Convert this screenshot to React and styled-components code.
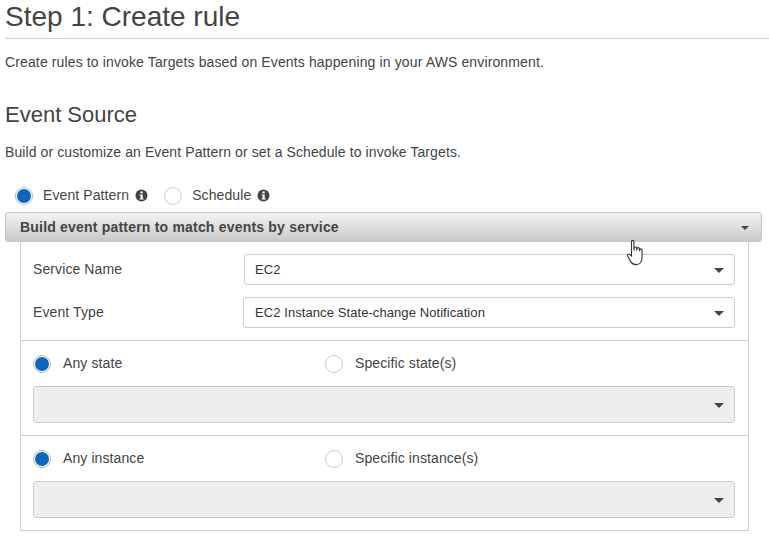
import React from "react";
import styled, { createGlobalStyle } from "styled-components";

const Global = createGlobalStyle`
  html, body { margin: 0; padding: 0; background: #fff; width: 769px; height: 539px; overflow: hidden; }
  body { font-family: "Liberation Sans", Arial, sans-serif; color: #444; }
  * { box-sizing: border-box; }
`;
const Page = styled.div`position: relative; width: 769px; height: 539px; padding: 0 0 0 5px; overflow: hidden;`;
const Title = styled.h1`
  margin: 0; width: 764px; height: 39px; border-bottom: 1px solid #ccc;
  font-size: 28px; line-height: 33px; font-weight: 400; color: #444;
`;
const Lead = styled.p`margin: 15px 0 0; font-size: 14px; line-height: 17px; color: #444; letter-spacing: .13px;`;
const Heading = styled.h2`margin: 30px 0 0; font-size: 22px; line-height: 27px; font-weight: 400; color: #444;`;
const Sub = styled.p`margin: 16px 0 0; font-size: 14px; line-height: 17px; color: #444; letter-spacing: .1px;`;
const SourceRow = styled.div`display: flex; align-items: center; height: 20px; margin-top: 24px; padding-left: 10px;`;
const Radio = styled.span`
  flex: none; width: 18px; height: 18px; margin-top: 2px; border-radius: 50%; background: #fff;
  border: 1px solid ${p => (p.$on ? "#a9bdd0" : "#ccc")};
  display: flex; align-items: center; justify-content: center;
  &::after { content: ""; width: 14px; height: 14px; border-radius: 50%; background: ${p => (p.$on ? "#1166bb" : "transparent")}; }
`;
const Label = styled.span`font-size: 14px; line-height: 17px; color: #444; letter-spacing: .1px; margin-left: ${p => p.$gap || 12}px;`;
const Info = styled.svg`width: 13px; height: 13px; margin-left: 6px; flex: none;`;
const Spacer = styled.span`width: ${p => p.$w}px; flex: none;`;
const Accordion = styled.div`
  display: flex; align-items: center; justify-content: space-between;
  width: 757px; height: 30px; margin-top: 7px; padding: 0 12px 0 14px;
  border: 1px solid #c6c6c6; border-radius: 3px;
  background: linear-gradient(#f4f4f4, #c9c9c9);
  font-size: 14px; font-weight: 700; color: #444; letter-spacing: .2px;
`;
const Panel = styled.div`
  width: 729px; margin-left: 15px; height: 289px;
  border: 1px solid #ccc; border-top: 0;
`;
const Fields = styled.div`height: 99px; padding: 12px 13px 0 12px; display: flex; flex-direction: column; gap: 12px; border-bottom: 1px solid #ccc;`;
const Field = styled.div`display: flex; align-items: center; justify-content: space-between;`;
const FieldLabel = styled.span`font-size: 14px; color: #444; letter-spacing: .1px; margin-bottom: 2px;`;
const Select = styled.div`
  display: flex; align-items: center; justify-content: space-between;
  width: ${p => p.$w || 491}px; height: ${p => p.$h || 31}px; padding: 0 10px 0 ${p => p.$pl || 10}px;
  border: 1px solid #ccc; border-radius: 3px;
  background: ${p => (p.$off ? "#eee" : "#fff")};
  font-size: 13px; letter-spacing: .08px; color: #333;
`;
const Arrow = styled.span`
  width: 0; height: 0; border-left: ${p => p.$s || 5}px solid transparent; border-right: ${p => p.$s || 5}px solid transparent;
  border-top: ${p => p.$s || 5}px solid #444; margin-top: 1px;
`;
const Group = styled.div`
  height: 95px; padding: 12px 13px 0 12px;
  border-bottom: ${p => (p.$last ? 0 : "1px solid #ccc")};
`;
const RadioRow = styled.div`display: grid; grid-template-columns: 292px 1fr; height: 20px;`;
const RadioCell = styled.div`display: flex; align-items: center;`;
const GroupSelect = styled(Select)`margin-top: 13px;`;
const Cursor = styled.svg`position: absolute; left: 626px; top: 239px; width: 22px; height: 30px;`;

const InfoIcon = () => (
  <Info viewBox="0 0 13 13">
    <circle cx="6.5" cy="6.5" r="6" fill="#444" />
    <rect x="5.5" y="2.4" width="2.2" height="2" fill="#fff" />
    <path d="M4.6 5.4h3.1v4.1h1v1.1H4.6V9.5h1V6.5h-1z" fill="#fff" />
  </Info>
);

export default function App() {
  return (
    <Page>
      <Global />
      <Title>Step 1: Create rule</Title>
      <Lead>Create rules to invoke Targets based on Events happening in your AWS environment.</Lead>
      <Heading>Event Source</Heading>
      <Sub>Build or customize an Event Pattern or set a Schedule to invoke Targets.</Sub>
      <SourceRow>
        <Radio $on />
        <Label $gap={10}>Event Pattern</Label>
        <InfoIcon />
        <Spacer $w={16} />
        <Radio />
        <Label $gap={10}>Schedule</Label>
        <InfoIcon />
      </SourceRow>
      <Accordion>
        Build event pattern to match events by service
        <Arrow $s={4} />
      </Accordion>
      <Panel>
        <Fields>
          <Field>
            <FieldLabel>Service Name</FieldLabel>
            <Select>EC2<Arrow /></Select>
          </Field>
          <Field>
            <FieldLabel>Event Type</FieldLabel>
            <Select $w={492} $pl={11}>EC2 Instance State-change Notification<Arrow /></Select>
          </Field>
        </Fields>
        <Group>
          <RadioRow>
            <RadioCell><Radio $on /><Label>Any state</Label></RadioCell>
            <RadioCell><Radio /><Label>Specific state(s)</Label></RadioCell>
          </RadioRow>
          <GroupSelect $w={702} $h={37} $off><span /><Arrow /></GroupSelect>
        </Group>
        <Group $last>
          <RadioRow>
            <RadioCell><Radio $on /><Label>Any instance</Label></RadioCell>
            <RadioCell><Radio /><Label>Specific instance(s)</Label></RadioCell>
          </RadioRow>
          <GroupSelect $w={702} $h={37} $off><span /><Arrow /></GroupSelect>
        </Group>
      </Panel>
      <Cursor viewBox="0 0 20 27">
        <path d="M5 2.2c0-1.500 2.200-1.500 2.200 0V10l.3-2c.3-1.200 2-1.200 2.200 0l.1 2 .3-1.500c.3-1.100 2-1 2.100.2l.1 1.800.4-1c.4-1 1.900-.7 1.900.5v7c0 3.500-2 6.200-5.500 6.200-2.500 0-3.800-1-5-3L1.600 15.600c-.9-1.400.8-2.800 2-1.600L5 15.500z" fill="#fff" stroke="#333" strokeWidth="1" strokeLinejoin="round" />
      </Cursor>
    </Page>
  );
}
